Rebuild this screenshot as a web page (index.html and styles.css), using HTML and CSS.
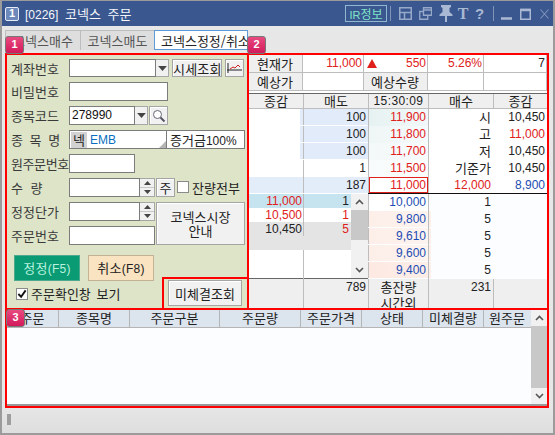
FILE: index.html
```html
<!DOCTYPE html>
<html lang="ko">
<head>
<meta charset="utf-8">
<title>코넥스 주문</title>
<link rel="stylesheet" href="styles.css">
</head>
<body>
<svg class="defs" width="0" height="0">
  <symbol id="up" viewBox="0 0 9 6"><path d="M1 5l3.500-3.500L8 5" fill="none" stroke="#555" stroke-width="1.600"/></symbol>
  <symbol id="down" viewBox="0 0 9 6"><path d="M1 1l3.500 3.500L8 1" fill="none" stroke="#555" stroke-width="1.600"/></symbol>
  <symbol id="tri-up" viewBox="0 0 7 4"><path d="M3.500 0L7 4H0z" fill="#444"/></symbol>
  <symbol id="tri-down" viewBox="0 0 7 4"><path d="M0 0h7L3.500 4z" fill="#444"/></symbol>
</svg>
<div class="window">
  <header class="titlebar">
    <span class="win-no">1</span>
    <span class="win-title"><span class="num-t">[0226]</span> 코넥스 주문</span>
    <span class="ir"><span class="num">IR</span>정보</span>
    <i class="vsep first"></i>
    <svg class="tool m8" width="13" height="13" viewBox="0 0 13 13"><path d="M.75.75h11.500v11.500H.75zM.75 5.500h11.500M5.500 5.500v6.750" fill="none" stroke="#97a9c9" stroke-width="1.500"/></svg>
    <svg class="tool m7" width="13" height="13" viewBox="0 0 13 13"><path d="M4.500.75h8v7.500h-8zM4.500 3h8M4.500 4.500H.75v7.750h8V8.500" fill="none" stroke="#97a9c9" stroke-width="1.300"/></svg>
    <svg class="tool m7 pin" width="14" height="17" viewBox="0 0 14 17"><path d="M2 0h10v2l-1.500 1v4l3 2.500V11H.5V9.500l3-2.500V3L2 2zM6 11h2v6H6z" fill="#a9b8d3"/></svg>
    <span class="tool-t">T</span>
    <span class="tool-q">?</span>
    <i class="vsep last"></i>
    <svg class="tool m7" width="11" height="14" viewBox="0 0 11 14"><path d="M0 11.500h11" stroke="#aab8d3" stroke-width="2.500"/></svg>
    <svg class="tool m8" width="11" height="12" viewBox="0 0 11 12"><path d="M.75 1.500h9.500v9.750H.75z" fill="none" stroke="#aab8d3" stroke-width="1.500"/><path d="M.5 2h10" stroke="#aab8d3" stroke-width="2.500"/></svg>
    <svg class="tool m9" width="9" height="10" viewBox="0 0 9 10"><path d="M.5.5l8 9M8.500.5l-8 9" stroke="#7f93b8" stroke-width="1.100"/></svg>
  </header>

  <nav class="tabs">
    <span class="tab">코넥스매수</span>
    <span class="tab">코넥스매도</span>
    <span class="tab active">코넥스정정/취소</span>
  </nav>

  <main class="panels">
    <section class="form-panel">
      <div class="row top">
        <label class="lbl">계좌번호</label>
        <div class="field w86"></div>
        <span class="combo"><svg width="9" height="5"><use href="#tri-down"/></svg></span>
        <button class="btn fetch">시세조회</button>
        <button class="btn chart"><svg width="17" height="14" viewBox="0 0 17 14"><path d="M2 2v10M1 9h15" stroke="#222"/><path d="M4 8l3-2 2 1 3-3 2 2" fill="none" stroke="#c22"/></svg></button>
      </div>
      <div class="row">
        <label class="lbl">비밀번호</label>
        <div class="field w99"></div>
      </div>
      <div class="row">
        <label class="lbl">종목코드</label>
        <div class="field w66 num-f">278990</div>
        <span class="combo"><svg width="9" height="5"><use href="#tri-down"/></svg></span>
        <button class="btn search"><svg width="14" height="14" viewBox="0 0 14 14"><circle cx="5.500" cy="5.500" r="4" fill="#fff" stroke="#667"/><path d="M8.500 8.500l4 4" stroke="#556" stroke-width="2"/></svg></button>
      </div>
      <div class="row">
        <label class="lbl spread">종 목 명</label>
        <div class="field name-field w98">
          <span class="chip">넥</span>
          <span class="emb">EMB</span>
          <i class="corner"></i>
        </div>
        <div class="field margin-field">증거금<span class="num">100%</span></div>
      </div>
      <div class="row">
        <label class="lbl tight">원주문번호</label>
        <div class="field w66"></div>
      </div>
      <div class="row">
        <label class="lbl spread wide">수 량</label>
        <div class="field w71"></div>
        <span class="spin"><span><svg width="7" height="4"><use href="#tri-up"/></svg></span><span><svg width="7" height="4"><use href="#tri-down"/></svg></span></span>
        <button class="btn unit">주</button>
        <span class="box"></span>
        <span class="all">잔량전부</span>
      </div>
      <div class="pair">
        <div class="pair-rows">
          <div class="row">
            <label class="lbl">정정단가</label>
            <div class="field w71"></div>
            <span class="spin"><span><svg width="7" height="4"><use href="#tri-up"/></svg></span><span><svg width="7" height="4"><use href="#tri-down"/></svg></span></span>
          </div>
          <div class="row">
            <label class="lbl">주문번호</label>
            <div class="field w86b"></div>
          </div>
        </div>
        <button class="btn market">코넥스시장<br>안내</button>
      </div>
      <div class="actions">
        <button class="act ok">정정<span class="num">(F5)</span></button>
        <button class="act cancel">취소<span class="num">(F8)</span></button>
      </div>
      <div class="confirm">
        <span class="box checked"><svg width="11" height="10" viewBox="0 0 11 10"><path d="M1.500 5l3 3 5-7" fill="none" stroke="#111" stroke-width="2"/></svg></span>
        <span>주문확인창 보기</span>
      </div>
      <div class="notch"><button class="btn pending">미체결조회</button></div>
    </section>

    <section class="book-panel">
      <div class="info">
        <div class="c head">현재가</div>
        <div class="c num r red">11,000</div>
        <div class="c num r red change"><i class="arrow"></i>550</div>
        <div class="c num r red">5.26%</div>
        <div class="c num r">7</div>
        <div class="c head">예상가</div>
        <div class="c"></div>
        <div class="c head">예상수량</div>
        <div class="c"></div>
        <div class="c"></div>
      </div>
      <div class="book-head">
        <div>종감</div><div>매도</div><div class="num-w">15:30:09</div><div>매수</div><div>종감</div>
      </div>
      <div class="line">
        <div class="cell"></div><div class="cell v bar num r">100</div><div class="cell v up1 num r red">11,900</div><div class="cell v r">시</div><div class="cell num r">10,450</div>
      </div>
      <div class="line">
        <div class="cell"></div><div class="cell v bar num r">100</div><div class="cell v up2 num r red">11,800</div><div class="cell v r">고</div><div class="cell num r red">11,000</div>
      </div>
      <div class="line">
        <div class="cell"></div><div class="cell v bar num r">100</div><div class="cell v up3 num r red">11,700</div><div class="cell v r">저</div><div class="cell num r">10,450</div>
      </div>
      <div class="line">
        <div class="cell"></div><div class="cell v num r">1</div><div class="cell v up4 num r red">11,500</div><div class="cell v r">기준가</div><div class="cell num r">10,450</div>
      </div>
      <div class="line">
        <div class="cell barfill"></div><div class="cell v barfill num r">187</div><div class="cell v cur num r red">11,000</div><div class="cell v num r red">12,000</div><div class="cell num r blue">8,900</div>
      </div>
      <div class="lower">
        <div class="fills">
          <div class="fill-list">
            <div class="fill hit"><span class="num r red">11,000</span><span class="num r q">1</span></div>
            <div class="fill"><span class="num r red">10,500</span><span class="num r q red">1</span></div>
            <div class="fill tall"><span class="num r">10,450</span><span class="num r q red">5</span></div>
          </div>
          <div class="scroll small">
            <span class="arrowbtn"><svg width="9" height="6"><use href="#up"/></svg></span>
            <span class="thumb"></span>
            <span class="arrowbtn end"><svg width="9" height="6"><use href="#down"/></svg></span>
          </div>
        </div>
        <div class="buys">
          <div class="buy"><div class="cell v num r blue p0">10,000</div><div class="cell v num r">1</div></div>
          <div class="buy"><div class="cell v num r blue dn">9,800</div><div class="cell v num r">5</div></div>
          <div class="buy"><div class="cell v num r blue dn">9,610</div><div class="cell v num r">5</div></div>
          <div class="buy"><div class="cell v num r blue dn">9,600</div><div class="cell v num r">5</div></div>
          <div class="buy"><div class="cell v num r blue dn d5">9,400</div><div class="cell v num r">5</div></div>
        </div>
      </div>
      <div class="foot">
        <div></div>
        <div class="num r v">789</div>
        <div class="v ctr">총잔량<br>시간외</div>
        <div class="num r v">231</div>
        <div class="v"></div>
      </div>
    </section>
  </main>

  <section class="orders">
    <div class="orders-body">
      <div class="grid-wrap">
        <div class="grid-head">
          <div>주문</div><div>종목명</div><div>주문구분</div><div>주문량</div><div>주문가격</div><div>상태</div><div>미체결량</div><div>원주문</div>
        </div>
        <div class="grid-rows"></div>
      </div>
      <div class="scroll big">
        <span class="arrowbtn"><svg width="9" height="6"><use href="#up"/></svg></span>
        <span class="thumb"></span>
        <span class="arrowbtn end"><svg width="9" height="6"><use href="#down"/></svg></span>
      </div>
    </div>
  </section>

  <footer class="status"><i class="grip"></i></footer>

  <span class="badge b1">1</span>
  <span class="badge b2">2</span>
  <span class="badge b3">3</span>
</div>
</body>
</html>
```

FILE: styles.css
```css
* { box-sizing: border-box; }
html, body { margin: 0; padding: 0; }
body { width: 555px; height: 435px; overflow: hidden; background: #e6e6e6; }
.defs { position: absolute; }
.window {
  position: relative;
  width: 555px; height: 435px;
  border: 2px solid #9b9b9b;
  border-top-width: 1px;
  background: #e7e7e7;
  display: flex; flex-direction: column;
  font: 13px/17px "Noto Sans CJK KR", "Liberation Sans", sans-serif;
  color: #222;
}
button { font: inherit; color: inherit; padding: 0; margin: 0; }
i { display: block; font-style: normal; }
.num { font-family: "Liberation Sans", "Noto Sans CJK KR", sans-serif; font-size: 12px; }
.r { text-align: right; }
.red { color: #e0201a; }
.blue { color: #1c4db3; }

/* title bar */
.titlebar {
  height: 25px; flex: none;
  background: #3a5790;
  display: flex; align-items: center;
  padding-left: 3px; padding-right: 4px;
  color: #fff;
}
.win-no {
  width: 14px; height: 14px; margin-right: 6px;
  border: 1.500px solid #e6ecf6; border-radius: 2px;
  background: #6d88ba; color: #fff;
  font: bold 11px/11px "Liberation Sans", sans-serif; text-align: center;
}
.win-title { flex: 1; word-spacing: 3px; white-space: nowrap; color: #f4f6fa; }
.num-t { font: 12px "Liberation Sans", sans-serif; }
.ir {
  width: 42px; height: 17px;
  border: 1px solid #8fb7cf; color: #7fe3c8;
  line-height: 15px; text-align: center; font-size: 12px; white-space: nowrap;
}
.ir .num { font-size: 11px; }
.vsep { width: 1px; height: 15px; background: #8194b8; }
.vsep.first { margin-left: 3px; }
.vsep.last { margin-left: 9px; }
.tool { flex: none; }
.m7 { margin-left: 7px; }
.m8 { margin-left: 8px; }
.m9 { margin-left: 9px; }
.tool-t { width: 12px; margin-left: 4px; text-align: center; font: bold 16px/16px "Liberation Serif", serif; color: #a9b8d3; }
.tool-q { width: 9px; margin-left: 6px; text-align: center; font: bold 15px/16px "Liberation Sans", sans-serif; color: #a9b8d3; }

/* tabs */
.tabs { height: 27px; flex: none; padding: 4px 0 0 3px; display: flex; align-items: flex-start; }
.tab {
  height: 20px; width: 75px;
  background: #dedede; border: 1px solid #bdbdbd; border-right: 0; border-bottom: 0;
  color: #555; text-align: center; line-height: 19px; white-space: nowrap;
}
.tab + .tab { width: 74px; }
.tab.active {
  width: 94px; background: #fff; color: #222;
  border: 1px solid #5f9ad6; padding-left: 6px; text-align: left;
  overflow: hidden;
}

/* panels */
.panels { height: 255px; flex: none; margin-left: 3px; display: flex; }
.form-panel {
  position: relative;
  width: 242px; height: 255px;
  border: 2px solid #f00; border-right: 0; border-bottom: 0;
  background: #dde4c8;
  padding: 3px 0 0 4px;
  color: #333;
}
.row { height: 19px; margin-bottom: 5px; display: flex; align-items: stretch; white-space: nowrap; }
.row.top { padding-top: 1px; }
.lbl { width: 58px; flex: none; line-height: 19px; color: #3a3a3a; }
.tight { letter-spacing: -.4px; }
.spread { word-spacing: 3px; }
.spread.wide { word-spacing: 4px; }
.field { background: #fff; border: 1px solid #7c7c7c; flex: none; }
.w86 { width: 87px; }
.w99 { width: 99px; }
.w66 { width: 66px; }
.w98 { width: 98px; }
.w71 { width: 71px; }
.w86b { width: 86px; }
.num-f { font: 12px/17px "Liberation Sans", sans-serif; color: #111; padding-left: 2px; }
.combo {
  width: 13px; flex: none; background: #f1f1f1;
  border: 1px solid #a7a7a7; border-left: 0;
  display: flex; align-items: center; justify-content: center;
}
.btn {
  background: #f1f1f1; border: 1px solid #a5a5a5;
  box-shadow: inset 1px 1px 0 #fff;
  color: #222; cursor: default;
}
.fetch { width: 50px; margin-left: 3px; line-height: 15px; white-space: nowrap; letter-spacing: .2px; }
.chart { width: 19px; margin-left: 3px; display: flex; align-items: center; justify-content: center; }
.search { width: 19px; margin-left: 1px; display: flex; align-items: center; justify-content: center; }
.name-field { position: relative; display: flex; align-items: center; padding-left: 1px; }
.chip { width: 16px; height: 16px; background: #d2d2d2; text-align: center; line-height: 15px; color: #222; }
.emb { margin-left: 3px; color: #0a6fc0; font: 12px "Liberation Sans", sans-serif; }
.corner {
  position: absolute; right: 0; bottom: 0;
  border-style: solid; border-width: 0 0 7px 7px;
  border-color: transparent transparent #b5b5b5 transparent;
}
.margin-field { width: 78px; border-left: 0; padding-left: 3px; line-height: 17px; color: #222; }
.spin { width: 15px; flex: none; display: flex; flex-direction: column; border: 1px solid #a7a7a7; border-left: 0; background: #f1f1f1; }
.spin span { flex: 1; display: flex; align-items: center; justify-content: center; }
.spin span + span { border-top: 1px solid #c8c8c8; }
.unit { width: 19px; margin-left: 1px; }
.box { width: 12px; height: 12px; margin: 3px 3px 0 2px; background: #fff; border: 1px solid #8a8a8a; flex: none; display: flex; align-items: center; justify-content: center; }
.all { line-height: 19px; color: #222; }
.pair { display: flex; height: 43px; }
.pair-rows { width: 145px; flex: none; }
.market { width: 89px; height: 43px; line-height: 14px; }
.actions { margin: 10px 0 0 3px; display: flex; gap: 8px; }
.act { width: 66px; height: 26px; line-height: 22px; letter-spacing: .3px; }
.ok { background: #0a9b74; border: 1px solid #4fa98e; color: #b9f2df; }
.cancel { background: #fae3c0; border: 1px solid #c2b394; color: #222; }
.confirm { margin: 3px 0 0 5px; display: flex; align-items: center; white-space: nowrap; height: 19px; word-spacing: 2px; color: #222; }
.confirm .box { margin: 1px 3px 0 0; }
.notch {
  position: absolute; right: 0; bottom: 0;
  width: 85px; height: 31px;
  background: #dde4c8;
  border: 2px solid #f00; border-width: 2px 0 0 2px;
  padding: 1px 0 0 4px;
}
.pending { width: 74px; height: 26px; white-space: nowrap; }

/* order book */
.book-panel { width: 302px; height: 255px; border: 2px solid #f00; border-bottom: 0; background: #fff; overflow: hidden; }
.info {
  display: grid; grid-template-columns: 54px 61px 64px 56px 63px; grid-auto-rows: 18px;
  height: 36px; border-bottom: 1px solid #666;
}
.c { border-right: 1px solid #bdbdbd; border-bottom: 1px solid #bdbdbd; padding-right: 1px; line-height: 17px; white-space: nowrap; }
.c.head { background: #efefef; text-align: center; }
.change { display: flex; justify-content: space-between; align-items: center; }
.arrow { margin-left: 3px; border-style: solid; border-width: 0 5px 9px 5px; border-color: transparent transparent #e0201a transparent; }
.book-head {
  margin-top: 2px; height: 16px;
  display: grid; grid-template-columns: 54px 65px 60px 65px 54px;
  background: #efefef; border-top: 1px solid #666; border-bottom: 1px solid #bdbdbd;
  line-height: 14px; text-align: center;
}
.book-head div + div { border-left: 1px solid #bdbdbd; }
.num-w { font: 12px/14px "Liberation Sans", sans-serif; letter-spacing: .4px; }
.line { display: grid; grid-template-columns: 54px 65px 60px 65px 54px; height: 17px; }
.cell { padding-right: 2px; line-height: 16px; white-space: nowrap; }
.v { border-left: 1px solid #bdbdbd; }
.bar { background: #e1ebf9; box-shadow: -3px 0 0 #e1ebf9; height: 16px; }
.up1 { background: linear-gradient(90deg, #e6f2f1, #f2f8f9); }
.up2 { background: linear-gradient(90deg, #eff6f6, #f5fafb); }
.up3 { background: linear-gradient(90deg, #f3f8f8, #f8fbfc); }
.up4 { background: linear-gradient(90deg, #f8fbfb, #fbfdfd); }
.barfill { background: #e3ecf9; height: 16px; }
.cur { box-shadow: inset 0 0 0 1px #e0201a; background: #fff; height: 16px; }
.lower { display: flex; height: 85px; }
.fills { width: 119px; flex: none; display: flex; }
.fill-list {
  width: 102px; flex: none;
  background: linear-gradient(#bdbdbd, #bdbdbd) 54px 0 / 1px 100% no-repeat;
}
.fill { display: grid; grid-template-columns: 54px 48px; height: 14px; line-height: 14px; }
.fill span { padding-right: 1px; line-height: 14px; }
.fill .q { border-left: 1px solid #bdbdbd; padding-right: 2px; }
.fill.hit { background: #c5e4f0; }
.fill.tall { background: #e4e4e4; height: 28px; align-items: start; }
.scroll { display: flex; flex-direction: column; background: #f1f1f1; flex: none; }
.scroll.small { width: 17px; height: 84px; }
.arrowbtn { height: 16px; flex: none; display: flex; align-items: center; justify-content: center; }
.thumb { background: #c8c8c8; display: block; }
.small .thumb { height: 30px; }
.small .end { margin-top: auto; }
.buys { flex: 1; border-top: 1px solid #111; margin-top: -1px; }
.buy { display: grid; grid-template-columns: 60px 65px 54px; height: 17px; background: #fcfdff; }
.p0 { background: #fff; }
.dn { height: 16px; background: linear-gradient(90deg, #fdeee8, #fdf3ef); box-shadow: 3px 0 0 #fdf0ea; }
.d5 { background: linear-gradient(90deg, #fde9e2, #fdeee8); }
.foot {
  margin-top: -1px; height: 31px; overflow: hidden;
  display: grid; grid-template-columns: 54px 65px 60px 65px 54px;
  background: #efefef; border-top: 1px solid #666;
  line-height: 16px;
}
.foot .num { padding-right: 2px; line-height: 16px; }
.ctr { text-align: center; }

/* orders grid */
.orders { height: 100px; flex: none; margin-left: 3px; width: 544px; border: 2px solid #f00; background: #fff; }
.orders-body { display: flex; height: 96px; }
.grid-wrap { flex: 1; display: flex; flex-direction: column; }
.grid-head {
  display: grid; grid-template-columns: 51px 71px 90px 81px 61px 61px 61px 47px;
  height: 18px; background: #dce4ee; border-bottom: 1px solid #b5b5b5;
  line-height: 16px; text-align: center; white-space: nowrap;
}
.grid-head div + div { border-left: 1px solid #b5b5b5; }
.grid-rows { flex: 1; background: #fcfdff; border-bottom: 2px solid #999; }
.scroll.big { width: 16px; border-bottom: 2px solid #999; }
.big .thumb { flex: 1; }

/* status */
.status { flex: 1; background: linear-gradient(#e6e6e6, #dedede); padding: 6px 0 0 5px; }
.grip {
  width: 4px; height: 11px;
  background: radial-gradient(circle, #999 .7px, transparent .8px) 0 0 / 2px 2px;
}

/* annotation badges */
.badge {
  position: absolute;
  width: 19px; height: 18px;
  background: linear-gradient(#e84a80, #d31a5a);
  border: 1px solid #777; border-radius: 3px;
  color: #fff; text-align: center;
  font: bold 11px/15px "Liberation Sans", sans-serif;
}
.b1 { left: 3px; top: 35px; }
.b2 { left: 245px; top: 35px; }
.b3 { left: 4px; top: 308px; }
```
